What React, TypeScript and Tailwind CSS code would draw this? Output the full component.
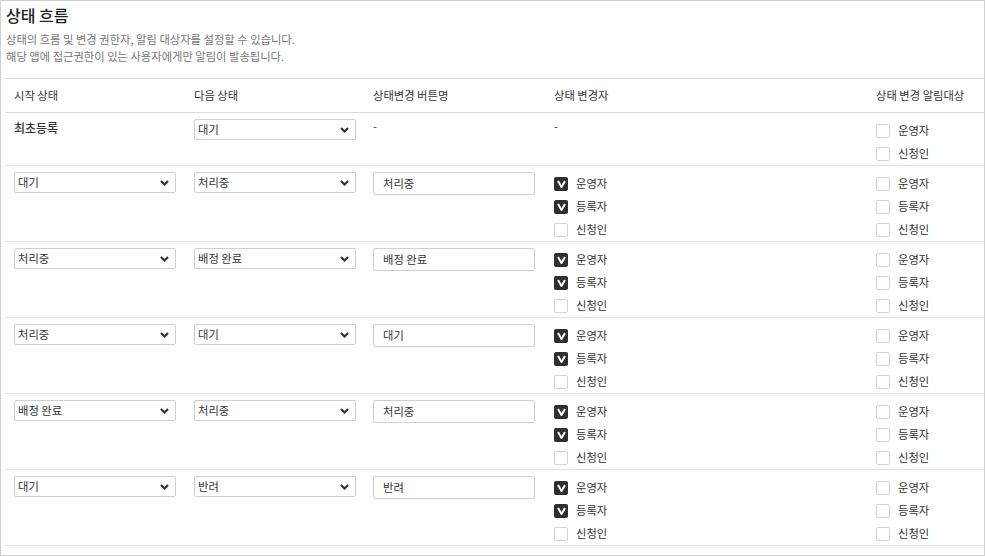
import React from 'react'

type Row = {
  from: string | null
  to: string
  label: string | null
  changers: { name: string; checked: boolean }[] | null
  notify: string[]
}

const rows: Row[] = [
  { from: null, to: '대기', label: null, changers: null, notify: ['운영자', '신청인'] },
  ...[
    ['대기', '처리중', '처리중'],
    ['처리중', '배정 완료', '배정 완료'],
    ['처리중', '대기', '대기'],
    ['배정 완료', '처리중', '처리중'],
    ['대기', '반려', '반려'],
  ].map(([from, to, label]) => ({
    from,
    to,
    label,
    changers: [
      { name: '운영자', checked: true },
      { name: '등록자', checked: true },
      { name: '신청인', checked: false },
    ],
    notify: ['운영자', '등록자', '신청인'],
  })),
]

function Select({ value }: { value: string }) {
  return (
    <div className="relative w-[162px] h-[21px] border border-[#cfcfcf] rounded-[2px] bg-white flex items-center pl-[3px] text-[11.3px] text-[#333]">
      <span>{value}</span>
      <svg className="absolute right-[6px] top-[7px]" width="9" height="6" viewBox="0 0 9 6">
        <path d="M1 1l3.5 3.5L8 1" fill="none" stroke="#333" strokeWidth="2.2" />
      </svg>
    </div>
  )
}

function Check({ name, checked }: { name: string; checked: boolean }) {
  return (
    <div className="flex items-center h-[23px] gap-[8px]">
      {checked ? (
        <div className="w-[14px] h-[14px] rounded-[2px] bg-[#2f2f2f] flex items-center justify-center">
          <svg width="9" height="8" viewBox="0 0 9 8">
            <path d="M1 1l3.5 6L8 1" fill="none" stroke="#fff" strokeWidth="2" />
          </svg>
        </div>
      ) : (
        <div className="w-[14px] h-[14px] rounded-[2px] border border-[#d2d2d2] bg-white" />
      )}
      <span className="text-[11.3px] text-[#333]">{name}</span>
    </div>
  )
}

export default function App() {
  return (
    <div
      className="w-[985px] h-[556px] border border-[#d0d0d0] bg-white pl-[4px] overflow-hidden"
      style={{ fontFamily: '"Noto Sans CJK KR", "Noto Sans", sans-serif' }}
    >
      <div className="pt-[3px] pl-[1px] text-[16px] leading-[22px] font-medium text-[#222]">상태 흐름</div>
      <div className="mt-[5px] pl-[1px] text-[11.3px] leading-[17px] text-[#777]">
        <div>상태의 흐름 및 변경 권한자, 알림 대상자를 설정할 수 있습니다.</div>
        <div>해당 앱에 접근권한이 있는 사용자에게만 알림이 발송됩니다.</div>
      </div>
      <table className="mt-[13px] w-full border-collapse text-[11.3px] text-[#333]">
        <thead>
          <tr className="border-t border-b border-[#dcdcdc] h-[34px]">
            <th className="w-[180px] pl-[9px] text-left font-normal">시작 상태</th>
            <th className="w-[179px] pl-[9px] text-left font-normal">다음 상태</th>
            <th className="w-[181px] pl-[9px] text-left font-normal">상태변경 버튼명</th>
            <th className="w-[322px] pl-[9px] text-left font-normal">상태 변경자</th>
            <th className="pl-[9px] text-left font-normal">상태 변경 알림대상</th>
          </tr>
        </thead>
        <tbody>
          {rows.map((r, i) => (
            <tr key={i} className="border-b border-[#e3e3e3] align-top">
              <td className="pl-[9px] pt-[6px]">
                {r.from ? (
                  <Select value={r.from} />
                ) : (
                  <div className="font-medium text-[12px] leading-[16px] pt-[1px]">최초등록</div>
                )}
              </td>
              <td className="pl-[9px] pt-[6px]">
                <Select value={r.to} />
              </td>
              <td className="pl-[9px] pt-[6px]">
                {r.label ? (
                  <div className="w-[162px] h-[23px] border border-[#cfcfcf] rounded-[2px] flex items-center pl-[9px]">
                    {r.label}
                  </div>
                ) : (
                  <div className="leading-[14px]">-</div>
                )}
              </td>
              <td className="pl-[9px] pt-[6px]">
                {r.changers ? (
                  r.changers.map((c) => <Check key={c.name} name={c.name} checked={c.checked} />)
                ) : (
                  <div className="leading-[14px]">-</div>
                )}
              </td>
              <td className="pl-[9px] pt-[6px]">
                {r.notify.map((n) => (
                  <Check key={n} name={n} checked={false} />
                ))}
              </td>
            </tr>
          ))}
        </tbody>
      </table>
    </div>
  )
}
